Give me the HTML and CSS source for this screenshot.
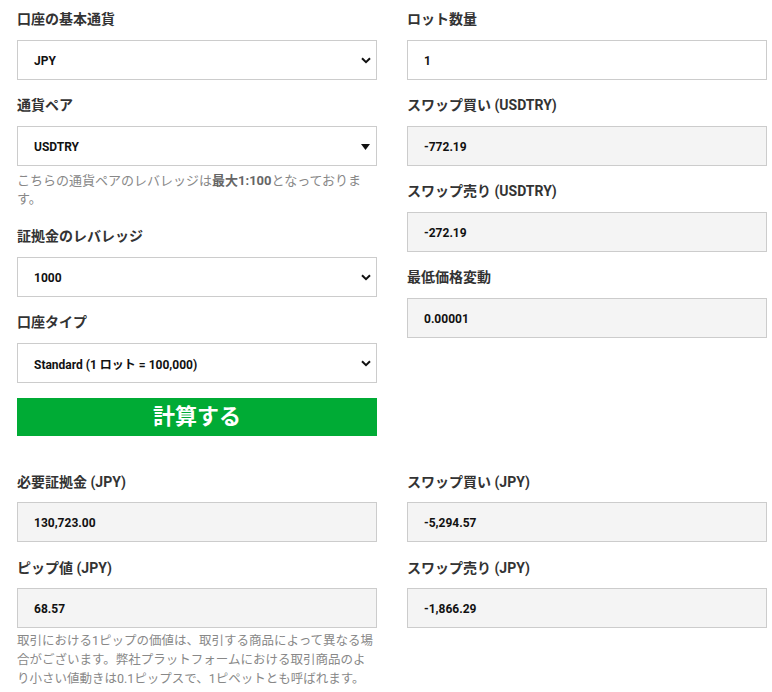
FILE: index.html
```html
<!DOCTYPE html>
<html lang="ja">
<head>
<meta charset="utf-8">
<title>計算ツール</title>
<link rel="stylesheet" href="styles.css">
</head>
<body>
<div class="page">
  <div class="grid">
    <div class="col">
      <div class="field">
        <div class="label">口座の基本通貨</div>
        <div class="box select"><span class="val">JPY</span>
          <svg class="chev" width="10" height="7" viewBox="0 0 10 7"><path d="M1 1.2 L5 5.2 L9 1.2" fill="none" stroke="#111" stroke-width="2"/></svg>
        </div>
      </div>
      <div class="field">
        <div class="label">通貨ペア</div>
        <div class="box select"><span class="val">USDTRY</span>
          <svg class="tri" width="9" height="6" viewBox="0 0 9 6"><path d="M0 0 H9 L4.5 6 Z" fill="#111"/></svg>
        </div>
        <p class="note note-top">こちらの通貨ペアのレバレッジは<b>最大1:100</b>となっております。</p>
      </div>
      <div class="field">
        <div class="label">証拠金のレバレッジ</div>
        <div class="box select"><span class="val">1000</span>
          <svg class="chev" width="10" height="7" viewBox="0 0 10 7"><path d="M1 1.2 L5 5.2 L9 1.2" fill="none" stroke="#111" stroke-width="2"/></svg>
        </div>
      </div>
      <div class="field">
        <div class="label">口座タイプ</div>
        <div class="box select"><span class="val">Standard (1 ロット = 100,000)</span>
          <svg class="chev" width="10" height="7" viewBox="0 0 10 7"><path d="M1 1.2 L5 5.2 L9 1.2" fill="none" stroke="#111" stroke-width="2"/></svg>
        </div>
      </div>
      <button class="calc">計算する</button>
    </div>
    <div class="col">
      <div class="field">
        <div class="label">ロット数量</div>
        <div class="box"><span class="val">1</span></div>
      </div>
      <div class="field">
        <div class="label">スワップ買い (USDTRY)</div>
        <div class="box ro"><span class="val">-772.19</span></div>
      </div>
      <div class="field">
        <div class="label">スワップ売り (USDTRY)</div>
        <div class="box ro"><span class="val">-272.19</span></div>
      </div>
      <div class="field">
        <div class="label">最低価格変動</div>
        <div class="box ro"><span class="val">0.00001</span></div>
      </div>
    </div>
  </div>
  <div class="grid results">
    <div class="col">
      <div class="field">
        <div class="label">必要証拠金 (JPY)</div>
        <div class="box ro"><span class="val">130,723.00</span></div>
      </div>
      <div class="field">
        <div class="label">ピップ値 (JPY)</div>
        <div class="box ro"><span class="val">68.57</span></div>
        <p class="note note-bottom">取引における1ピップの価値は、取引する商品によって異なる場合がございます。弊社プラットフォームにおける取引商品のより小さい値動きは0.1ピップスで、1ピペットとも呼ばれます。</p>
      </div>
    </div>
    <div class="col">
      <div class="field">
        <div class="label">スワップ買い (JPY)</div>
        <div class="box ro"><span class="val">-5,294.57</span></div>
      </div>
      <div class="field">
        <div class="label">スワップ売り (JPY)</div>
        <div class="box ro"><span class="val">-1,866.29</span></div>
      </div>
    </div>
  </div>
</div>
</body>
</html>
```
FILE: styles.css
```css
* { box-sizing: border-box; }
html, body { margin: 0; padding: 0; background: #fff; }
body {
  font-family: Roboto, "Noto Sans CJK JP", sans-serif;
  color: #333;
}
.page {
  padding: 9px 5px 0 17px;
  width: 772px;
}
.grid {
  display: grid;
  grid-template-columns: 360px 360px;
  column-gap: 30px;
}
.results { margin-top: 36px; }
.col { display: flex; flex-direction: column; }
.field { margin-bottom: 15px; }
.results .field { margin-bottom: 16px; }
.label {
  font-size: 14px;
  font-weight: 700;
  line-height: 20px;
  color: #333;
  margin-bottom: 11px;
}
.results .label { margin-bottom: 10px; }
.box {
  height: 40px;
  border: 1px solid #ccc;
  background: #fff;
  display: flex;
  align-items: center;
  padding: 0 16px;
  padding-top: 1px;
}
.box.ro { background: #f4f4f4; }
.val {
  font-size: 12px;
  font-weight: 700;
  color: #111;
}
.select { justify-content: space-between; padding-right: 4px; }
.chev { margin-right: 1px; margin-bottom: 1px; }
.tri { margin-right: 2px; }
.note {
  margin: 0;
  font-size: 13px;
  color: #888;
}
.note b { color: #666; font-weight: 700; }
.note-top { margin-top: 6px; line-height: 18px; margin-bottom: 3px; }
.note-bottom { margin-top: 3px; line-height: 19px; font-size: 12.5px; }
.calc {
  height: 38px;
  width: 360px;
  border: 0;
  background: #00ab35;
  color: #fff;
  font-family: Roboto, "Noto Sans CJK JP", sans-serif;
  font-size: 22px;
  line-height: 30px;
  font-weight: 700;
  padding: 0 0 1px;
  cursor: pointer;
}
```
